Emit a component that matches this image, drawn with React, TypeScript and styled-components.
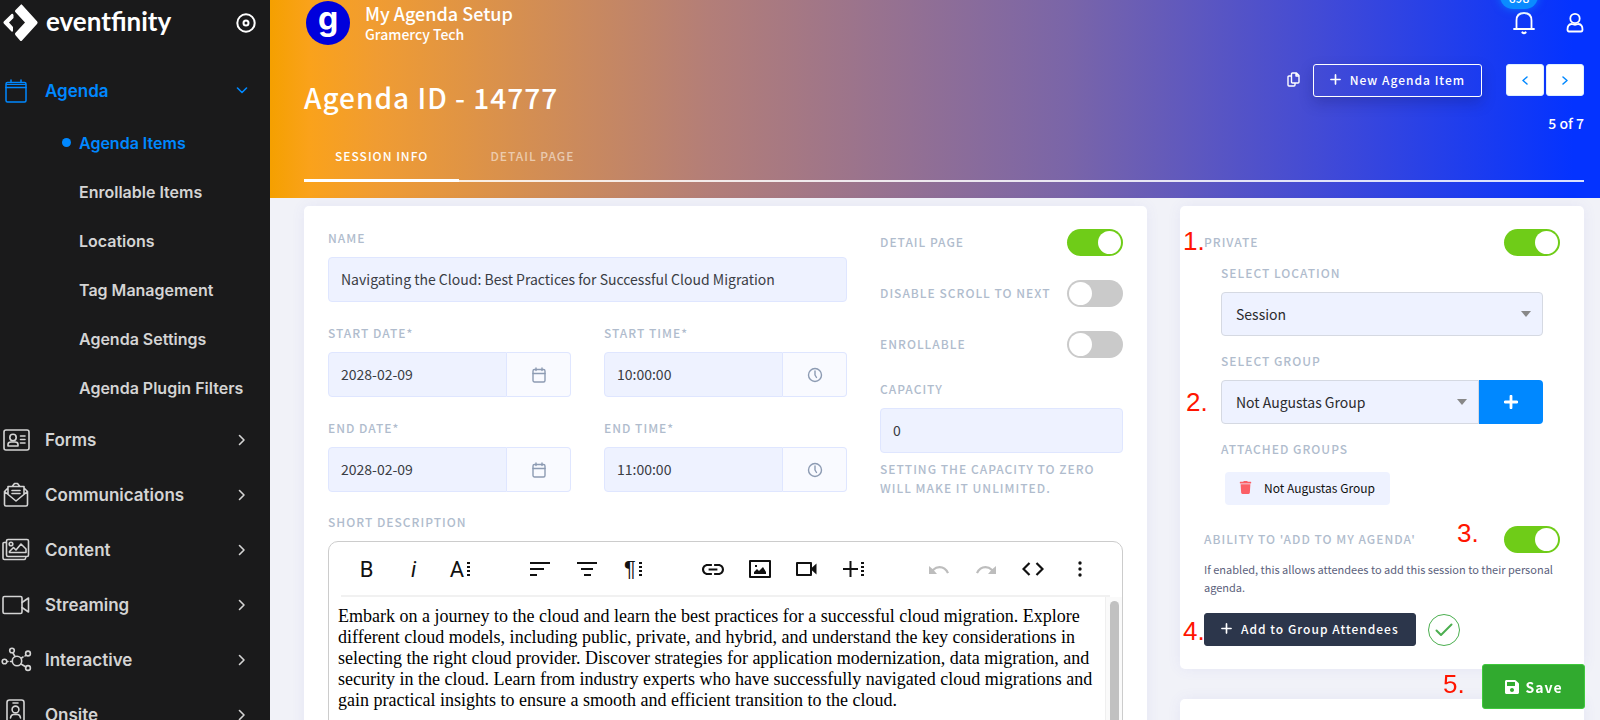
import React from "react";
import styled, { createGlobalStyle, css } from "styled-components";
import { FaSave, FaTrash } from "react-icons/fa";

const sans = `"Noto Sans CJK SC", "Noto Sans", sans-serif`;
const nav = `"Inter", "Noto Sans", sans-serif`;

const GlobalStyle = createGlobalStyle`
  *, *::before, *::after { box-sizing: border-box; }
  body { margin: 0; background: #f1f2f8; font-family: ${sans}; }
  button, input, select { font-family: inherit; margin: 0; }
  svg { display: block; flex: none; }
`;

const Shell = styled.div`
  display: flex;
  height: 100vh;
  overflow: hidden;
`;

/* ---------- sidebar ---------- */

const Sidebar = styled.aside`
  flex: none;
  width: 270px;
  background: #1a1a1b;
  color: #dcdcdc;
  font-family: ${nav};
  overflow: hidden;
`;

const Brand = styled.div`
  display: flex;
  align-items: center;
  height: 63px;
  padding: 0 14px 17px 3px;
  color: #fff;
`;

const BrandName = styled.span`
  flex: 1;
  padding: 0 0 4px 8px;
  font-family: "Lato", sans-serif;
  font-size: 26px;
  line-height: 30px;
  font-weight: 700;
`;

const IconButton = styled.button`
  display: flex;
  padding: 0;
  border: 0;
  background: none;
  color: inherit;
  cursor: pointer;
`;

const NavList = styled.ul`
  list-style: none;
  margin: 0;
  padding: 0;
`;

const NavLink = styled.a<{ $active?: boolean }>`
  display: flex;
  align-items: center;
  height: 55px;
  padding-right: 22px;
  font-size: 17px;
  line-height: 24px;
  font-weight: 600;
  color: ${(p) => (p.$active ? "#0088ff" : "#d4d4d4")};
  text-decoration: none;
`;

const NavIcon = styled.span`
  display: flex;
  justify-content: center;
  width: 32px;
  margin-right: 13px;
`;

const NavText = styled.span`
  flex: 1;
`;

const SubLink = styled.a<{ $active?: boolean }>`
  display: flex;
  align-items: center;
  height: 49px;
  padding-left: 79px;
  font-size: 16px;
  line-height: 24px;
  font-weight: 600;
  color: ${(p) => (p.$active ? "#0088ff" : "#d4d4d4")};
  text-decoration: none;

  ${(p) =>
    p.$active &&
    css`
      padding-left: 62px;
      &::before {
        content: "";
        width: 9px;
        height: 9px;
        margin-right: 8px;
        border-radius: 50%;
        background: #0088ff;
      }
    `}
`;

/* ---------- header ---------- */

const Main = styled.main`
  flex: 1;
  min-width: 0;
`;

const Header = styled.header`
  height: 198px;
  padding: 0 16px 0 34px;
  color: #fff;
  background: linear-gradient(
    90deg,
    #f5a000 0,
    #faa21b 3%,
    #f09c32 8%,
    #b37e78 33%,
    #7a65a8 60%,
    #3f49d8 80%,
    #0433ff 98%
  );
`;

const TopBar = styled.div`
  display: flex;
  align-items: center;
  height: 46px;
`;

const Avatar = styled.span`
  display: flex;
  align-items: center;
  justify-content: center;
  width: 44px;
  height: 44px;
  margin: 0 15px 0 2px;
  padding-bottom: 8px;
  border-radius: 50%;
  background: #0000dc;
  font-family: "Inter", sans-serif;
  font-size: 32px;
  line-height: 34px;
  font-weight: 700;
`;

const Titles = styled.div`
  flex: 1;
`;

const SetupName = styled.div`
  font-size: 18px;
  line-height: 22px;
  font-weight: 500;
`;

const OrgName = styled.div`
  font-size: 14px;
  line-height: 20px;
  font-weight: 500;
`;

const BellWrap = styled.div`
  position: relative;
  margin-right: 31px;
`;

const Badge = styled.span`
  position: absolute;
  left: -13px;
  bottom: 26px;
  width: 38px;
  height: 26px;
  border-radius: 13px;
  background: #0a8bff;
  box-shadow: 0 0 8px rgba(10, 139, 255, 0.7);
  font-size: 12px;
  line-height: 30px;
  font-weight: 500;
  text-align: center;
`;

const TitleBar = styled.div`
  display: flex;
  align-items: flex-start;
  height: 84px;
  padding-top: 18px;
`;

const PageTitle = styled.h1`
  flex: 1;
  margin: 0;
  padding-top: 12px;
  font-size: 28px;
  line-height: 42px;
  font-weight: 500;
  letter-spacing: 1px;
`;

const CopyButton = styled(IconButton)`
  margin: 8px 13px 0 0;
`;

const ActionButton = styled.button<{ $dark?: boolean }>`
  display: flex;
  align-items: center;
  gap: 9px;
  height: 33px;
  padding: 0 16px 2px;
  border: 1px solid ${(p) => (p.$dark ? "#2c364b" : "#fff")};
  border-radius: 3px;
  background: ${(p) => (p.$dark ? "#2c364b" : "transparent")};
  box-shadow: ${(p) => (p.$dark ? "none" : "0 6px 14px rgba(20, 20, 90, 0.25)")};
  color: #fff;
  font-size: 12px;
  line-height: 20px;
  font-weight: 500;
  letter-spacing: 1px;
  white-space: nowrap;
  cursor: pointer;
`;

const Pager = styled.div`
  display: grid;
  grid-template-columns: 38px 38px;
  gap: 12px 2px;
  margin-left: 24px;
`;

const PagerButton = styled.button`
  display: flex;
  align-items: center;
  justify-content: center;
  height: 32px;
  padding: 0;
  border: 1px solid #dff0ff;
  border-radius: 3px;
  background: #fff;
  color: #0088ff;
`;

const PagerText = styled.span`
  grid-column: 1 / -1;
  font-size: 14px;
  line-height: 30px;
  font-weight: 500;
  text-align: right;
`;

const Tabs = styled.nav`
  display: flex;
  height: 52px;
  border-bottom: 2px solid rgba(255, 255, 255, 0.85);
`;

const Tab = styled.a<{ $active?: boolean }>`
  height: 52px;
  padding: 16px 31px 0;
  border-bottom: 3px solid ${(p) => (p.$active ? "#fff" : "transparent")};
  color: ${(p) => (p.$active ? "#fff" : "rgba(255, 255, 255, 0.55)")};
  font-size: 12px;
  line-height: 20px;
  font-weight: 500;
  letter-spacing: 1px;
  text-decoration: none;
  white-space: nowrap;
`;

/* ---------- cards and fields ---------- */

const Content = styled.div`
  display: grid;
  grid-template-columns: minmax(0, 1fr) 404px;
  align-items: start;
  gap: 33px;
  padding: 8px 16px 0 34px;
`;

const Card = styled.section`
  min-height: 120px;
  padding: 23px 24px;
  border-radius: 5px;
  background: #fff;
  box-shadow: 0 0 14px rgba(90, 90, 200, 0.08);
`;

const Side = styled.div`
  display: grid;
  gap: 30px;
`;

const FormGrid = styled.div`
  display: grid;
  grid-template-columns: repeat(3, minmax(0, 1fr));
  gap: 33px;
  margin-bottom: 16px;
`;

const Fields = styled.div`
  grid-column: span 2;
  display: grid;
  grid-template-columns: repeat(2, minmax(0, 1fr));
  align-content: start;
  gap: 22px 33px;
`;

const Field = styled.div<{ $wide?: boolean }>`
  grid-column: ${(p) => (p.$wide ? "1 / -1" : "auto")};
`;

const labelText = css`
  color: #b0bccd;
  font-size: 12px;
  line-height: 18px;
  font-weight: 500;
  letter-spacing: 1px;
  white-space: nowrap;
`;

const Label = styled.label`
  ${labelText}
  display: block;
  margin-bottom: 10px;
`;

const RowLabel = styled.label`
  ${labelText}
  flex: 1;
  padding-bottom: 2px;
`;

const Caption = styled.div`
  ${labelText}
`;

const Input = styled.input`
  display: block;
  width: 100%;
  min-width: 0;
  height: 45px;
  padding: 0 12px 2px;
  border: 1px solid #dfe6ff;
  border-radius: 4px;
  background: #eef2ff;
  color: #3a3d44;
  font-size: 14px;
`;

const InputGroup = styled.div`
  display: flex;

  ${Input} {
    flex: 1;
    border-radius: 4px 0 0 4px;
  }
`;

const AddOn = styled.button`
  display: flex;
  align-items: center;
  justify-content: center;
  width: 64px;
  height: 45px;
  border: 1px solid #dfe6ff;
  border-left: 0;
  border-radius: 0 4px 4px 0;
  background: #f9faff;
  color: #8d9bb3;
`;

const Options = styled.div`
  display: flex;
  flex-direction: column;
`;

const ToggleRow = styled.div<{ $gap?: number }>`
  position: relative;
  display: flex;
  align-items: center;
  height: 27px;
  margin-bottom: ${(p) => p.$gap ?? 0}px;
`;

const Toggle = styled.input.attrs({ type: "checkbox" })`
  appearance: none;
  flex: none;
  display: flex;
  width: 56px;
  height: 27px;
  padding: 2px;
  border-radius: 14px;
  background: #cacaca;
  cursor: pointer;

  &::before {
    content: "";
    width: 23px;
    height: 23px;
    border-radius: 50%;
    background: #fff;
  }
  &:checked {
    justify-content: flex-end;
    background: #6fcc18;
  }
`;

const Help = styled.p`
  margin: 6px 0 0;
  color: #b0bccd;
  font-size: 12px;
  line-height: 19px;
  font-weight: 500;
  letter-spacing: 1px;
`;

/* ---------- editor ---------- */

const Editor = styled.div`
  height: 260px;
  border: 1px solid #ccc;
  border-radius: 10px;
  overflow: hidden;
`;

const Toolbar = styled.div`
  display: flex;
  gap: 32px;
  height: 55px;
  margin: 0 12px;
  padding: 0 7px 0 2px;
  border-bottom: 2px solid #f1f1f1;
`;

const ToolGroup = styled.div<{ $end?: boolean }>`
  display: flex;
  margin-left: ${(p) => (p.$end ? "auto" : "0")};
`;

const Tool = styled.button<{ $italic?: boolean; $plain?: boolean }>`
  display: flex;
  align-items: center;
  justify-content: center;
  gap: 3px;
  width: 47px;
  height: 54px;
  padding: 0;
  border: 0;
  background: none;
  color: #111;
  font-family: ${(p) => (p.$plain ? `"Liberation Sans", sans-serif` : "Roboto, sans-serif")};
  font-size: 22px;
  font-weight: 400;
  font-style: ${(p) => (p.$italic ? "italic" : "normal")};

  &:disabled {
    color: #bdbdbd;
  }
`;

const EditorBody = styled.div`
  display: flex;
  height: 204px;
`;

const EditorText = styled.div`
  flex: 1;
  padding: 9px 10px 0 9px;
  color: #000;
  font-family: "Liberation Serif", "Times New Roman", serif;
  font-size: 18px;
  line-height: 21px;
  outline: 0;
`;

const ScrollTrack = styled.div`
  width: 17px;
  padding: 4px 3px 0 4px;
  border-left: 1px solid #efefef;
  background: #fafafa;
`;

const ScrollThumb = styled.div`
  width: 9px;
  height: 180px;
  border-radius: 5px;
  background: #c1c1c1;
`;

/* ---------- side card ---------- */

const Indented = styled.div`
  padding: 8px 17px 0;
`;

const SelectField = styled.div`
  position: relative;
  margin-bottom: 16px;
`;

const SelectRow = styled.div`
  display: flex;
`;

const SelectBox = styled.div`
  flex: 1;
  display: grid;
  align-items: center;

  > * {
    grid-area: 1 / 1;
  }
  > svg {
    justify-self: end;
    margin-right: 12px;
    pointer-events: none;
  }
`;

const Select = styled.select<{ $joined?: boolean }>`
  appearance: none;
  width: 100%;
  height: 44px;
  padding: 0 14px;
  border: 1px solid #d5d9e2;
  border-radius: ${(p) => (p.$joined ? "4px 0 0 4px" : "4px")};
  background: #eef2ff;
  color: #2b2b2e;
  font-size: 14px;
`;

const AddButton = styled.button`
  display: flex;
  align-items: center;
  justify-content: center;
  width: 64px;
  height: 44px;
  border: 0;
  border-radius: 0 4px 4px 0;
  background: #0088ff;
  color: #fff;
`;

const Chip = styled.div`
  display: inline-flex;
  align-items: center;
  gap: 12px;
  height: 33px;
  margin: 14px 4px 21px;
  padding: 0 15px 2px 14px;
  border-radius: 4px;
  background: #eef2ff;
  color: #111;
  font-size: 12px;
  line-height: 20px;
`;

const Note = styled.p`
  margin: 7px 0 17px;
  color: #5b5f7c;
  font-size: 11px;
  line-height: 18px;
`;

const ActionRow = styled.div`
  position: relative;
  display: flex;
  align-items: center;
  gap: 12px;
`;

const CheckCircle = styled.span`
  display: flex;
  align-items: center;
  justify-content: center;
  width: 32px;
  height: 32px;
  border: 1px solid #4caf50;
  border-radius: 50%;
  color: #4caf50;
`;

const SaveBar = styled.div`
  position: fixed;
  right: 15px;
  bottom: 11px;
`;

const SaveButton = styled.button`
  display: flex;
  align-items: center;
  justify-content: center;
  gap: 5px;
  width: 103px;
  height: 45px;
  border: 1px solid #3fc83c;
  border-radius: 3px;
  background: #31aa2f;
  color: #fff;
  font-size: 14px;
  line-height: 20px;
  font-weight: 700;
  letter-spacing: 1px;
`;

/* Step markers float over the panel, beside the control they describe. */
const Step = styled.span<{ $left: number; $top: number }>`
  position: absolute;
  left: ${(p) => p.$left}px;
  top: ${(p) => p.$top}px;
  color: #ff1500;
  font-family: "Liberation Sans", Arial, sans-serif;
  font-size: 26px;
  line-height: 28px;
`;

/* ---------- icons ---------- */

type IconProps = {
  w: number;
  h?: number;
  box?: string;
  sw?: number;
  children: React.ReactNode;
};

const Line = ({ w, h = w, box, sw = 2, children }: IconProps) => (
  <svg
    width={w}
    height={h}
    viewBox={box ?? `0 0 ${w} ${h}`}
    fill="none"
    stroke="currentColor"
    strokeWidth={sw}
    strokeLinecap="round"
    strokeLinejoin="round"
    aria-hidden="true"
  >
    {children}
  </svg>
);

const Solid = ({ w, h = w, box, children }: IconProps) => (
  <svg width={w} height={h} viewBox={box ?? `0 0 ${w} ${h}`} fill="currentColor" aria-hidden="true">
    {children}
  </svg>
);

const Dots = () => (
  <Solid w={4} h={14}>
    <path d="M0 0h3v2H0zM0 4h3v2H0zM0 8h3v2H0zM0 12h3v2H0z" />
  </Solid>
);

const Logo = () => (
  <Solid w={35} h={38}>
    <path d="M18 0.500 L12.500 6 Q11.500 7.200 12.500 8.300 L22 18.500 L12.500 28.800 Q11.500 30 12.500 31.200 L17 36.500 Q18 37.500 19 36.500 L34 20 Q35.200 18.500 34 17.200 L19 0.800 Q18.500 0 18 0.500Z" />
    <path d="M8.500 10 L0.800 17.500 Q0 18.500 0.800 19.500 L8.500 27.500 Q9.500 28 10 27 V23 L6 18.500 L10.500 14 V11 Q9.800 9.300 8.500 10Z" />
  </Solid>
);

const ChevronRight = () => (
  <Line w={12} h={12} sw={1.6}>
    <path d="M3.500 1.500 8 6l-4.500 4.500" />
  </Line>
);

const Caret = () => (
  <svg width="10" height="6" viewBox="0 0 10 6" fill="#888" aria-hidden="true">
    <path d="M0 0h10L5 6z" />
  </svg>
);

const CalendarNav = () => (
  <Line w={22} h={24} sw={1.5}>
    <rect x="1" y="3.500" width="20" height="19.500" rx="1.500" />
    <path d="M1 8.500h20M6 1v2.500M16 1v2.500" />
    <path d="M1.500 5.500h19" strokeWidth="1" />
  </Line>
);

const FormsIcon = () => (
  <Line w={27} h={22} sw={1.6}>
    <rect x="1" y="1" width="25" height="20" rx="2" />
    <circle cx="10" cy="8.500" r="3.200" />
    <path d="M5 17v-1.500q0-2.500 3-2.500h4q3 0 3 2.500V17zM17.500 7h4.500M17.500 10.500h4.500M17.500 14h4.500" />
  </Line>
);

const MailIcon = () => (
  <Line w={26} h={25} sw={1.6}>
    <path d="M1.500 9.500v13q0 1.500 1.500 1.500h20q1.500 0 1.500-1.500v-13L13 19zM1.500 9.500 5 6M24.500 9.500 21 6M5 12V4.500h16V12M9.500 4l2-2.500h3l2 2.500" />
    <path d="M9 8.500h8M9 11.500h8" />
  </Line>
);

const GalleryIcon = () => (
  <Line w={28} h={23} sw={1.6}>
    <rect x="4.500" y="1.500" width="22" height="17" rx="1.500" />
    <path d="M4 4.500H2q-1 0-1 1V20q0 1.500 1.500 1.500H22q1.500 0 1.800-2" />
    <circle cx="9" cy="6" r="1.800" />
    <path d="M7.500 14.500v-1l4-4 2.500 2.500 5-6 5 5v3.500z" />
  </Line>
);

const StreamIcon = () => (
  <Line w={28} h={20} sw={1.6}>
    <rect x="1" y="1.500" width="19" height="17" rx="1.500" />
    <path d="M20 7.500 26.500 3v14L20 12.500" />
  </Line>
);

const NetworkIcon = () => (
  <Line w={31} h={25} sw={1.6}>
    <circle cx="16" cy="14" r="4.700" />
    <circle cx="11" cy="3.500" r="2.300" />
    <circle cx="27" cy="6.500" r="2.400" />
    <circle cx="27" cy="21" r="2.400" />
    <circle cx="3.500" cy="14.500" r="2.300" />
    <path d="M12 6l2 3.500M20.500 11l1.500-1M24 9l.8-.8M20 17l5 3M6 14.500h1M9.500 14.500h1.500" />
  </Line>
);

const BadgeIcon = () => (
  <Line w={20} h={32} sw={1.6}>
    <rect x="1" y="1" width="17" height="30" rx="2.500" />
    <circle cx="9.500" cy="10.500" r="3.400" />
    <path d="M7 4h5M4.500 19q.5-3.500 3-3.500h4q2.500 0 3 3.500" />
  </Line>
);

const FieldCalendar = () => (
  <Line w={14} h={16} sw={1.4}>
    <rect x="1" y="2.500" width="12" height="12.500" rx="1.500" />
    <path d="M1 6.500h12M4 1v2.500M10 1v2.500" />
  </Line>
);

const FieldClock = () => (
  <Line w={16} sw={1.4}>
    <circle cx="8" cy="8" r="6.500" />
    <path d="M8 4v4l1.500 2.500" />
  </Line>
);

const Plus = ({ size, sw }: { size: number; sw: number }) => (
  <Line w={size} box="0 0 12 12" sw={sw}>
    <path d="M6 1v10M1 6h10" />
  </Line>
);

/* ---------- page ---------- */

const subItems = [
  "Agenda Items",
  "Enrollable Items",
  "Locations",
  "Tag Management",
  "Agenda Settings",
  "Agenda Plugin Filters",
];

const sections = [
  { name: "Forms", Icon: FormsIcon },
  { name: "Communications", Icon: MailIcon },
  { name: "Content", Icon: GalleryIcon },
  { name: "Streaming", Icon: StreamIcon },
  { name: "Interactive", Icon: NetworkIcon },
  { name: "Onsite", Icon: BadgeIcon },
];

const PickerField = ({
  id,
  label,
  value,
  kind,
}: {
  id: string;
  label: string;
  value: string;
  kind: "date" | "time";
}) => (
  <Field>
    <Label htmlFor={id}>{label}</Label>
    <InputGroup>
      <Input id={id} defaultValue={value} />
      <AddOn type="button" aria-label={`Pick ${kind}`}>
        {kind === "date" ? <FieldCalendar /> : <FieldClock />}
      </AddOn>
    </InputGroup>
  </Field>
);

const SideNav = () => (
  <Sidebar>
    <Brand>
      <Logo />
      <BrandName>eventfinity</BrandName>
      <IconButton type="button" aria-label="Pin menu">
        <Line w={20} sw={2}>
          <circle cx="10" cy="10" r="8.700" />
          <circle cx="10" cy="10" r="2.500" />
        </Line>
      </IconButton>
    </Brand>
    <NavList>
      <li>
        <NavLink href="#agenda" $active>
          <NavIcon>
            <CalendarNav />
          </NavIcon>
          <NavText>Agenda</NavText>
          <Line w={12} h={7} sw={1.6}>
            <path d="M1.500 1 6 5.500 10.500 1" />
          </Line>
        </NavLink>
        <NavList>
          {subItems.map((item, i) => (
            <li key={item}>
              <SubLink href="#item" $active={i === 0}>
                {item}
              </SubLink>
            </li>
          ))}
        </NavList>
      </li>
      {sections.map(({ name, Icon }) => (
        <li key={name}>
          <NavLink href="#section">
            <NavIcon>
              <Icon />
            </NavIcon>
            <NavText>{name}</NavText>
            <ChevronRight />
          </NavLink>
        </li>
      ))}
    </NavList>
  </Sidebar>
);

const PageHeader = () => (
  <Header>
    <TopBar>
      <Avatar>g</Avatar>
      <Titles>
        <SetupName>My Agenda Setup</SetupName>
        <OrgName>Gramercy Tech</OrgName>
      </Titles>
      <BellWrap>
        <IconButton type="button" aria-label="Notifications">
          <Line w={22} h={24} sw={1.8}>
            <path d="M1 18h20M3.500 18V9.500Q3.500 2 11 2t7.500 7.500V18" />
            <path d="M9.500 21.500q1.500 1.500 3 0" strokeWidth="2.200" />
          </Line>
        </IconButton>
        <Badge>698</Badge>
      </BellWrap>
      <IconButton type="button" aria-label="Account">
        <Line w={18} h={22} sw={1.8}>
          <circle cx="9" cy="6.500" r="4.700" />
          <path d="M1.500 17.500q0-5 4-5.500 3.500 1.500 7 0 4 .5 4 5.500 0 2-1.500 2h-12q-1.500 0-1.500-2z" />
        </Line>
      </IconButton>
    </TopBar>
    <TitleBar>
      <PageTitle>Agenda ID - 14777</PageTitle>
      <CopyButton type="button" aria-label="Duplicate">
        <Line w={13} h={15} sw={1.4}>
          <path d="M5.500 1h4L12 3.500V10q0 1-1 1H5.500q-1 0-1-1V2q0-1 1-1zM9 1v3h3M4.500 4H2Q1 4 1 5v8q0 1 1 1h5q1 0 1-1v-2" />
        </Line>
      </CopyButton>
      <ActionButton type="button">
        <Plus size={11} sw={1.8} />
        New Agenda Item
      </ActionButton>
      <Pager>
        <PagerButton type="button" aria-label="Previous">
          <Line w={6} h={9} sw={1.5}>
            <path d="M5 1 1 4.500 5 8" />
          </Line>
        </PagerButton>
        <PagerButton type="button" aria-label="Next">
          <Line w={6} h={9} sw={1.5}>
            <path d="M1 1l4 3.500L1 8" />
          </Line>
        </PagerButton>
        <PagerText>5 of 7</PagerText>
      </Pager>
    </TitleBar>
    <Tabs>
      <Tab href="#info" $active>
        SESSION INFO
      </Tab>
      <Tab href="#detail">DETAIL PAGE</Tab>
    </Tabs>
  </Header>
);

const DescriptionEditor = () => (
  <Editor>
    <Toolbar>
      <ToolGroup>
        <Tool type="button">B</Tool>
        <Tool type="button" $italic>
          i
        </Tool>
        <Tool type="button">
          A<Dots />
        </Tool>
      </ToolGroup>
      <ToolGroup>
        <Tool type="button" aria-label="Align left">
          <Solid w={20} h={14}>
            <path d="M0 0h20v2H0zM0 6h14v2H0zM0 12h7v2H0z" />
          </Solid>
        </Tool>
        <Tool type="button" aria-label="Align center">
          <Solid w={20} h={14}>
            <path d="M0 0h20v2H0zM4 6h12v2H4zM7 12h7v2H7z" />
          </Solid>
        </Tool>
        <Tool type="button" $plain>
          ¶<Dots />
        </Tool>
      </ToolGroup>
      <ToolGroup>
        <Tool type="button" aria-label="Insert link">
          <Solid w={22} h={11} box="2 7 20 10">
            <path d="M3.900 12c0-1.710 1.390-3.100 3.100-3.100h4V7H7c-2.760 0-5 2.240-5 5s2.240 5 5 5h4v-1.900H7c-1.710 0-3.100-1.390-3.100-3.100zM8 13h8v-2H8v2zm9-6h-4v1.900h4c1.710 0 3.100 1.390 3.100 3.100s-1.390 3.100-3.100 3.100h-4V17h4c2.760 0 5-2.240 5-5s-2.240-5-5-5z" />
          </Solid>
        </Tool>
        <Tool type="button" aria-label="Insert image">
          <Solid w={22} h={18}>
            <path fillRule="evenodd" d="M1 0h20q1 0 1 1v16q0 1-1 1H1q-1 0-1-1V1Q0 0 1 0zm1 2v14h18V2z" />
            <path d="M5 14v-2l3-3 2 2 4-4 3 5v2zM6 5h2v2H6z" />
          </Solid>
        </Tool>
        <Tool type="button" aria-label="Insert video">
          <Solid w={21} h={14}>
            <path fillRule="evenodd" d="M1 0h14q1 0 1 1v12q0 1-1 1H1q-1 0-1-1V1Q0 0 1 0zm1 2v10h12V2z" />
            <path d="M15.500 6 20.500 1.500v11L15.500 8z" />
          </Solid>
        </Tool>
        <Tool type="button" aria-label="More rich">
          <Solid w={15} h={16}>
            <path d="M6.500 0h2v7H15v2H8.500v7h-2V9H0V7h6.500z" />
          </Solid>
          <Dots />
        </Tool>
      </ToolGroup>
      <ToolGroup $end>
        <Tool type="button" aria-label="Undo" disabled>
          <Solid w={20} h={9}>
            <path d="M10.500 1Q6.500 1 3.500 4L0 1v8h8L5 5.500Q7.500 3.300 10.500 3.300 15.500 3.300 18 8.500L20 7.700Q17 1 10.500 1z" />
          </Solid>
        </Tool>
        <Tool type="button" aria-label="Redo" disabled>
          <Solid w={20} h={9}>
            <path d="M9.500 1Q13.500 1 16.500 4L20 1v8h-8l3-3.500Q12.500 3.300 9.500 3.300 4.500 3.300 2 8.500L0 7.700Q3 1 9.500 1z" />
          </Solid>
        </Tool>
        <Tool type="button" aria-label="Code view">
          <svg width="22" height="14" viewBox="0 0 22 14" fill="none" stroke="currentColor" strokeWidth="2.200">
            <path d="M7.500 1 1.500 7l6 6M14.500 1l6 6-6 6" />
          </svg>
        </Tool>
        <Tool type="button" aria-label="More">
          <Solid w={4} h={16}>
            <circle cx="2" cy="2" r="1.700" />
            <circle cx="2" cy="8" r="1.700" />
            <circle cx="2" cy="14" r="1.700" />
          </Solid>
        </Tool>
      </ToolGroup>
    </Toolbar>
    <EditorBody>
      <EditorText role="textbox" aria-labelledby="short-description" tabIndex={0}>
        Embark on a journey to the cloud and learn the best practices for a successful cloud
        migration. Explore different cloud models, including public, private, and hybrid, and
        understand the key considerations in selecting the right cloud provider. Discover
        strategies for application modernization, data migration, and security in the cloud. Learn
        from industry experts who have successfully navigated cloud migrations and gain practical
        insights to ensure a smooth and efficient transition to the cloud.
      </EditorText>
      <ScrollTrack>
        <ScrollThumb />
      </ScrollTrack>
    </EditorBody>
  </Editor>
);

const SessionCard = () => (
  <Card>
    <FormGrid>
      <Fields>
        <Field $wide>
          <Label htmlFor="name">NAME</Label>
          <Input
            id="name"
            defaultValue="Navigating the Cloud: Best Practices for Successful Cloud Migration"
          />
        </Field>
        <PickerField id="start-date" label="START DATE*" value="2028-02-09" kind="date" />
        <PickerField id="start-time" label="START TIME*" value="10:00:00" kind="time" />
        <PickerField id="end-date" label="END DATE*" value="2028-02-09" kind="date" />
        <PickerField id="end-time" label="END TIME*" value="11:00:00" kind="time" />
      </Fields>
      <Options>
        <ToggleRow $gap={24}>
          <RowLabel htmlFor="detail-page">DETAIL PAGE</RowLabel>
          <Toggle id="detail-page" defaultChecked />
        </ToggleRow>
        <ToggleRow $gap={24}>
          <RowLabel htmlFor="disable-scroll">DISABLE SCROLL TO NEXT</RowLabel>
          <Toggle id="disable-scroll" />
        </ToggleRow>
        <ToggleRow $gap={22}>
          <RowLabel htmlFor="enrollable">ENROLLABLE</RowLabel>
          <Toggle id="enrollable" />
        </ToggleRow>
        <Label htmlFor="capacity">CAPACITY</Label>
        <Input id="capacity" defaultValue="0" />
        <Help>SETTING THE CAPACITY TO ZERO WILL MAKE IT UNLIMITED.</Help>
      </Options>
    </FormGrid>
    <Label as="div" id="short-description">
      SHORT DESCRIPTION
    </Label>
    <DescriptionEditor />
  </Card>
);

const PrivacyCard = () => (
  <Card>
    <ToggleRow>
      <Step $left={-21} $top={-2}>1.</Step>
      <RowLabel htmlFor="private">PRIVATE</RowLabel>
      <Toggle id="private" defaultChecked />
    </ToggleRow>
    <Indented>
      <SelectField>
        <Label htmlFor="location">SELECT LOCATION</Label>
        <SelectBox>
          <Select id="location" defaultValue="Session">
            <option>Session</option>
          </Select>
          <Caret />
        </SelectBox>
      </SelectField>
      <SelectField>
        <Step $left={-35} $top={36}>2.</Step>
        <Label htmlFor="group">SELECT GROUP</Label>
        <SelectRow>
          <SelectBox>
            <Select id="group" $joined defaultValue="Not Augustas Group">
              <option>Not Augustas Group</option>
            </Select>
            <Caret />
          </SelectBox>
          <AddButton type="button" aria-label="Attach group">
            <Plus size={14} sw={2.4} />
          </AddButton>
        </SelectRow>
      </SelectField>
      <Caption>ATTACHED GROUPS</Caption>
      <Chip>
        <IconButton type="button" aria-label="Remove group">
          <FaTrash size={13} color="#fb5f66" />
        </IconButton>
        Not Augustas Group
      </Chip>
    </Indented>
    <ToggleRow>
      <RowLabel htmlFor="add-to-agenda">ABILITY TO 'ADD TO MY AGENDA'</RowLabel>
      <Step $left={253} $top={-7}>3.</Step>
      <Toggle id="add-to-agenda" defaultChecked />
    </ToggleRow>
    <Note>If enabled, this allows attendees to add this session to their personal agenda.</Note>
    <ActionRow>
      <Step $left={-21} $top={4}>4.</Step>
      <ActionButton type="button" $dark>
        <Plus size={11} sw={1.8} />
        Add to Group Attendees
      </ActionButton>
      <CheckCircle>
        <Line w={18} h={14} sw={2}>
          <path d="M1.500 7.500 6 12 16.500 1.500" />
        </Line>
      </CheckCircle>
    </ActionRow>
  </Card>
);

export default function App() {
  return (
    <Shell>
      <GlobalStyle />
      <SideNav />
      <Main>
        <PageHeader />
        <Content>
          <SessionCard />
          <Side>
            <PrivacyCard />
            <Card />
          </Side>
        </Content>
      </Main>
      <SaveBar>
        <Step $left={-39} $top={6}>5.</Step>
        <SaveButton type="button">
          <FaSave size={16} />
          Save
        </SaveButton>
      </SaveBar>
    </Shell>
  );
}
